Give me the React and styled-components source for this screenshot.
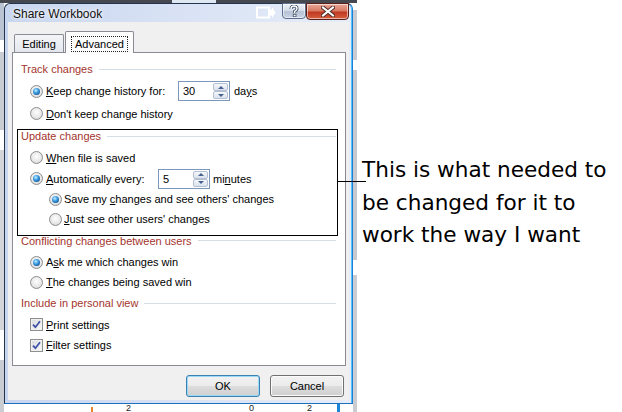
import React from 'react';
import styled, { createGlobalStyle } from 'styled-components';

const GlobalStyle = createGlobalStyle`
  html, body {
    margin: 0;
    padding: 0;
    background: #fff;
  }
  body {
    font-family: "Liberation Sans", Arial, sans-serif;
    font-size: 11px;
    color: #000;
  }
`;

const Screen = styled.div`
  display: flex;
  width: 622px;
  height: 412px;
  overflow: hidden;
  background: #fff;
`;

// the Excel window peeking out behind the dialog
const Desktop = styled.div`
  flex: none;
  width: 357px;
  height: 412px;
  box-sizing: border-box;
  padding: 3px 0 0 4px;
  display: flex;
  flex-direction: column;
  background:
    linear-gradient(#dfe7f2, #dfe7f2) 172px 0 / 44px 3px no-repeat,
    linear-gradient(#45484e, #45484e) 0 0 / 100% 3px no-repeat,
    linear-gradient(to bottom, #b9c3d1 0 40px, #fff 40px 52px, #c9ccd1 52px 130px, #fff 130px 150px, #d3d5d9 150px 330px, #fff 330px 360px, #c9ccd1 360px 100%) 0 0 / 4px 100% no-repeat,
    linear-gradient(to bottom, #fff 0 10px, #c8ccd2 10px 60px, #fff 60px 70px, #c6c9ce 70px 260px, #fff 260px 275px, #c9ccd1 275px 100%) 353px 0 / 4px 100% no-repeat,
    #fff;
`;

const Dialog = styled.div`
  flex: none;
  width: 349px;
  height: 401px;
  box-sizing: border-box;
  display: flex;
  flex-direction: column;
  border: 1px solid #22344f;
  border-right-color: #1b7fd8;
  border-bottom-color: #1f6fbf;
  border-radius: 6px 6px 0 0;
  background: linear-gradient(to right, #c7d5ef 0%, #d7e1f4 45%, #e6edf9 100%);
  box-shadow: inset -1px 0 0 #56c3ff;
`;

const TitleBar = styled.div`
  flex: none;
  display: flex;
  align-items: flex-start;
  height: 18px;
  padding: 0 3px 0 8px;
`;

const Title = styled.div`
  flex: 1;
  font-size: 12px;
  line-height: 20px;
  color: #111;
  text-shadow: 0 0 6px #fff, 0 0 3px #fff;
`;

const GhostIcon = styled.svg`
  margin: 2px 6px 0 0;
`;

const CaptionButton = styled.div`
  box-sizing: border-box;
  width: ${p => p.$w}px;
  height: ${p => p.$h}px;
  margin-top: -1px;
  border: 1px solid ${p => (p.$close ? '#5a1f18' : '#5d6f8c')};
  border-radius: 0 0 4px 4px;
  display: flex;
  align-items: center;
  justify-content: center;
  background: ${p =>
    p.$close
      ? 'linear-gradient(#e8a998 0%, #d77a64 45%, #c13a22 55%, #d5603f 100%)'
      : 'linear-gradient(#eef2f8 0%, #d6deea 45%, #b7c3d5 55%, #c9d4e4 100%)'};
  box-shadow: inset 0 0 0 1px rgba(255, 255, 255, 0.55);
`;

const Body = styled.div`
  flex: 1;
  margin: 0 3px 3px 3px;
  padding: 9px 3px 0 4px;
  background: #f0f0f0;
  display: flex;
  flex-direction: column;
`;

const TabRow = styled.div`
  position: relative;
  z-index: 1;
  display: flex;
  align-items: flex-end;
  gap: 1px;
  height: 22px;
  margin-bottom: -1px;
  padding-left: 2px;
`;

const Tab = styled.div`
  box-sizing: border-box;
  width: ${p => p.$w}px;
  height: ${p => (p.$active ? 22 : 18)}px;
  margin-bottom: ${p => (p.$active ? 0 : 1)}px;
  border: 1px solid #898c95;
  border-bottom: none;
  border-radius: 2px 2px 0 0;
  padding-top: ${p => (p.$active ? 2 : 1)}px;
  display: flex;
  align-items: center;
  justify-content: center;
  background: ${p => (p.$active ? '#fcfcfd' : 'linear-gradient(#f4f5f7, #e3e7ed)')};
  font-size: 11px;
`;

const FocusLabel = styled.span`
  border: 1px dotted #222;
  padding: 1px 3px;
  line-height: 12px;
`;

const Panel = styled.div`
  flex: none;
  height: 314px;
  box-sizing: border-box;
  border: 1px solid #898c95;
  background: #fff;
  padding-top: 5px;
  display: flex;
  flex-direction: column;
`;

const GroupHeader = styled.div`
  display: flex;
  align-items: center;
  gap: 6px;
  height: ${p => p.$h}px;
  padding: 0 9px 0 8px;
  color: #a3352d;
  white-space: nowrap;

  &::after {
    content: '';
    flex: 1;
    height: 1px;
    background: #d5dfe7;
  }
`;

const Row = styled.div`
  display: flex;
  align-items: center;
  height: ${p => p.$h}px;
  padding-left: ${p => (p.$indent ? 36 : 17)}px;
  white-space: nowrap;
`;

// the hand-drawn box and pointer line around "Update changes"
const Marked = styled.div`
  position: relative;

  &::before {
    content: '';
    position: absolute;
    top: 4px;
    bottom: -7px;
    left: 4px;
    right: 7px;
    border: 1px solid #000;
    pointer-events: none;
  }

  &::after {
    content: '';
    position: absolute;
    top: 56px;
    left: 324px;
    width: 29px;
    height: 1px;
    background: #000;
  }
`;

const Radio = styled.span`
  flex: none;
  box-sizing: border-box;
  width: 13px;
  height: 13px;
  margin-right: ${p => (p.$tight ? 2 : 3)}px;
  border-radius: 50%;
  border: 1px solid #8b8d8f;
  background: radial-gradient(circle at 50% 40%, #fdfdfd 0, #e9e9e9 55%, #cdcdcd 100%);
  display: flex;
  align-items: center;
  justify-content: center;

  &::after {
    content: '';
    display: ${p => (p.$checked ? 'block' : 'none')};
    width: 7px;
    height: 7px;
    border-radius: 50%;
    background: radial-gradient(circle at 40% 35%, #c4f0ff 0, #3d9de2 40%, #0d4b8f 85%);
  }
`;

const CheckBox = styled.span`
  flex: none;
  box-sizing: border-box;
  width: 13px;
  height: 13px;
  margin-right: 3px;
  border: 1px solid #8e8f8f;
  background: linear-gradient(135deg, #d9dbde, #f9f9f9);
  box-shadow: inset 0 0 0 1px #f1f1f1;
  display: flex;
  align-items: center;
  justify-content: center;
`;

const Label = styled.span`
  display: inline-block;
  width: ${p => (p.$w ? `${p.$w}px` : 'auto')};
`;

const Key = styled.span`
  text-decoration: underline;
`;

const Spinner = styled.div`
  box-sizing: border-box;
  display: flex;
  width: 52px;
  height: 20px;
  padding: 1px;
  border: 1px solid #7b97bc;
  background: #fff;
`;

const SpinValue = styled.span`
  flex: 1;
  display: flex;
  align-items: center;
  padding-left: 3px;
`;

const SpinButtons = styled.div`
  width: 15px;
  display: flex;
  flex-direction: column;
`;

const SpinButton = styled.span`
  flex: 1;
  box-sizing: border-box;
  border: 1px solid #b3bfd2;
  border-radius: 2px;
  background: linear-gradient(#f6f8fb, #dbe2ec);
  display: flex;
  align-items: center;
  justify-content: center;

  &::after {
    content: '';
    border-left: 3px solid transparent;
    border-right: 3px solid transparent;
    ${p => (p.$down ? 'border-top' : 'border-bottom')}: 3px solid #46618f;
  }
`;

const Unit = styled.span`
  margin-left: ${p => p.$gap}px;
`;

const ButtonRow = styled.div`
  display: flex;
  justify-content: flex-end;
  gap: 10px;
  margin-top: 9px;
  padding-right: 2px;
`;

const Button = styled.button`
  width: 74px;
  height: 22px;
  padding: 0;
  font: inherit;
  color: #000;
  border: 1px solid ${p => (p.$default ? '#3c7fb1' : '#707070')};
  border-radius: 3px;
  background: linear-gradient(#f2f2f2 0%, #ebebeb 50%, #dddddd 51%, #cfcfcf 100%);
  box-shadow: inset 0 0 0 1px ${p => (p.$default ? '#9ad9f8' : '#fbfbfb')};
`;

const SheetEdge = styled.div`
  display: flex;
  align-items: flex-start;
  height: 8px;
  font-size: 9px;
  line-height: 8px;
  color: #222;
`;

const Bar = styled.span`
  width: ${p => p.$w}px;
  height: 8px;
  margin-top: ${p => p.$top}px;
  margin-left: ${p => p.$left}px;
  background: ${p => p.$color};
`;

const Digit = styled.span`
  margin-left: ${p => p.$left}px;
`;

const Note = styled.div`
  padding: 154px 0 0 5px;
  font-family: "DejaVu Sans", sans-serif;
  font-size: 21.6px;
  line-height: 32.5px;
  color: #000;
  white-space: nowrap;
`;

const UpArrow = () => <SpinButton />;
const DownArrow = () => <SpinButton $down />;

const Spin = ({ value }) => (
  <Spinner>
    <SpinValue>{value}</SpinValue>
    <SpinButtons>
      <UpArrow />
      <DownArrow />
    </SpinButtons>
  </Spinner>
);

const Tick = () => (
  <svg width="9" height="9" viewBox="0 0 9 9">
    <path d="M1 4.6 L3.4 7.2 L8 1.2" fill="none" stroke="#3b4ea6" strokeWidth="1.7" />
  </svg>
);

export default function App() {
  return (
    <Screen>
      <GlobalStyle />
      <Desktop>
        <Dialog>
          <TitleBar>
            <Title>Share Workbook</Title>
            <GhostIcon width="20" height="13" viewBox="0 0 20 13">
              <rect x="1" y="1.5" width="12" height="10" fill="none" stroke="#fff" strokeWidth="2" />
              <path d="M13 3.5 H16 V1 L19.5 6.5 L16 12 V9.5 H13" fill="#fff" />
            </GhostIcon>
            <CaptionButton $w={24} $h={16}>
              <svg width="10" height="12" viewBox="0 0 10 12">
                <path
                  d="M2 4 Q2 1 5 1 Q8 1 8 3.6 Q8 5.4 5.6 6.4 V8"
                  fill="none"
                  stroke="#3b4a63"
                  strokeWidth="3"
                />
                <path
                  d="M2 4 Q2 1 5 1 Q8 1 8 3.6 Q8 5.4 5.6 6.4 V8"
                  fill="none"
                  stroke="#fff"
                  strokeWidth="1.4"
                />
                <rect x="4.2" y="9.2" width="2.8" height="2.6" fill="#fff" stroke="#3b4a63" strokeWidth="0.8" />
              </svg>
            </CaptionButton>
            <CaptionButton $close $w={43} $h={17}>
              <svg width="14" height="11" viewBox="0 0 14 11">
                <path d="M2 1.5 L12 9.5 M12 1.5 L2 9.5" stroke="#4a2a26" strokeWidth="4" strokeLinecap="square" />
                <path d="M2 1.5 L12 9.5 M12 1.5 L2 9.5" stroke="#fff" strokeWidth="2" strokeLinecap="square" />
              </svg>
            </CaptionButton>
          </TitleBar>

          <Body>
            <TabRow>
              <Tab $w={50}>Editing</Tab>
              <Tab $w={69} $active>
                <FocusLabel>Advanced</FocusLabel>
              </Tab>
            </TabRow>

            <Panel>
              <GroupHeader $h={22}>Track changes</GroupHeader>
              <Row $h={22}>
                <Radio $checked />
                <Label $w={132}>
                  <Key>K</Key>eep change history for:
                </Label>
                <Spin value="30" />
                <Unit $gap={4}>
                  da<Key>y</Key>s
                </Unit>
              </Row>
              <Row $h={23}>
                <Radio />
                <Label>
                  <Key>D</Key>on't keep change history
                </Label>
              </Row>

              <Marked>
                <GroupHeader $h={22}>Update changes</GroupHeader>
                <Row $h={21}>
                  <Radio />
                  <Label>
                    <Key>W</Key>hen file is saved
                  </Label>
                </Row>
                <Row $h={21}>
                  <Radio $checked />
                  <Label $w={112}>
                    <Key>A</Key>utomatically every:
                  </Label>
                  <Spin value="5" />
                  <Unit $gap={3}>
                    mi<Key>n</Key>utes
                  </Unit>
                </Row>
                <Row $h={20} $indent>
                  <Radio $checked $tight />
                  <Label>
                    Save my <Key>c</Key>hanges and see others' changes
                  </Label>
                </Row>
                <Row $h={20} $indent>
                  <Radio $tight />
                  <Label>
                    <Key>J</Key>ust see other users' changes
                  </Label>
                </Row>
              </Marked>

              <GroupHeader $h={23}>Conflicting changes between users</GroupHeader>
              <Row $h={20}>
                <Radio $checked />
                <Label>
                  A<Key>s</Key>k me which changes win
                </Label>
              </Row>
              <Row $h={20}>
                <Radio />
                <Label>
                  <Key>T</Key>he changes being saved win
                </Label>
              </Row>

              <GroupHeader $h={22}>Include in personal view</GroupHeader>
              <Row $h={21}>
                <CheckBox>
                  <Tick />
                </CheckBox>
                <Label>
                  <Key>P</Key>rint settings
                </Label>
              </Row>
              <Row $h={20}>
                <CheckBox>
                  <Tick />
                </CheckBox>
                <Label>
                  <Key>F</Key>ilter settings
                </Label>
              </Row>
            </Panel>

            <ButtonRow>
              <Button $default>OK</Button>
              <Button>Cancel</Button>
            </ButtonRow>
          </Body>
        </Dialog>

        <SheetEdge>
          <Bar $w={2} $left={87} $top={3} $color="#e8842c" />
          <Digit $left={33}>2</Digit>
          <Digit $left={118}>0</Digit>
          <Digit $left={53}>2</Digit>
          <Bar $w={3} $left={25} $top={0} $color="#1a86d8" />
        </SheetEdge>
      </Desktop>

      <Note>
        <div>This is what needed to</div>
        <div>be changed for it to</div>
        <div>work the way I want</div>
      </Note>
    </Screen>
  );
}
